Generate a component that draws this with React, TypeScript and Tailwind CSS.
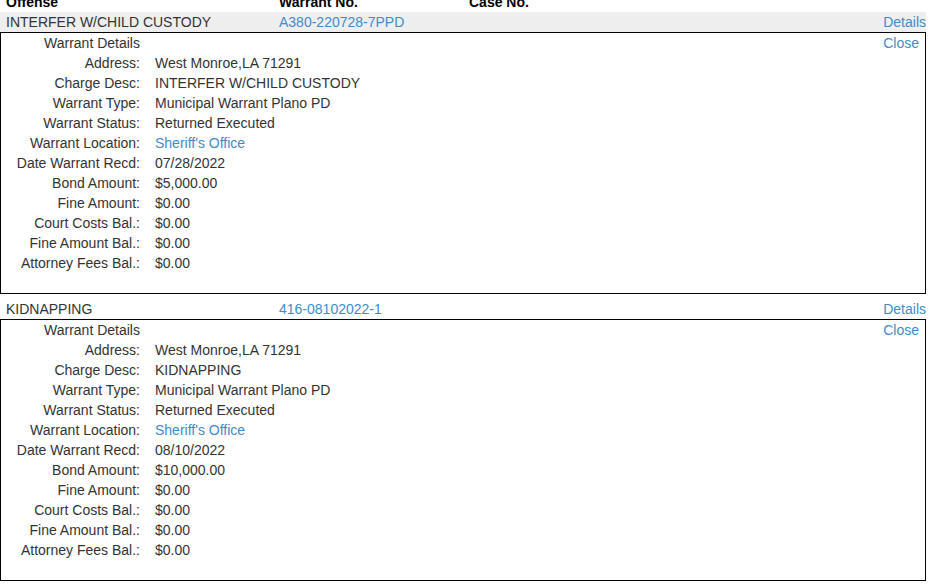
const warrants = [
  {
    offense: "INTERFER W/CHILD CUSTODY",
    number: "A380-220728-7PPD",
    shaded: true,
    details: {
      address: "West Monroe,LA 71291",
      charge: "INTERFER W/CHILD CUSTODY",
      recd: "07/28/2022",
      bond: "$5,000.00",
    },
  },
  {
    offense: "KIDNAPPING",
    number: "416-08102022-1",
    shaded: false,
    details: {
      address: "West Monroe,LA 71291",
      charge: "KIDNAPPING",
      recd: "08/10/2022",
      bond: "$10,000.00",
    },
  },
];

type Details = (typeof warrants)[number]["details"];

function Row({ label, children }: { label: string; children: React.ReactNode }) {
  return (
    <div className="flex h-5 items-center">
      <span className="w-[139px] text-right">{label}</span>
      <span className="pl-[15px]">{children}</span>
    </div>
  );
}

function DetailsBox({ d }: { d: Details }) {
  return (
    <div className="w-[926px] border border-black pb-5">
      <div className="flex h-5 items-center justify-between">
        <span className="pl-[43px]">Warrant Details</span>
        <span className="pr-[6px] text-[#428bca]">Close</span>
      </div>
      <Row label="Address:">{d.address}</Row>
      <Row label="Charge Desc:">{d.charge}</Row>
      <Row label="Warrant Type:">Municipal Warrant Plano PD</Row>
      <Row label="Warrant Status:">Returned Executed</Row>
      <Row label="Warrant Location:">
        <span className="text-[#428bca]">Sheriff's Office</span>
      </Row>
      <Row label="Date Warrant Recd:">{d.recd}</Row>
      <Row label="Bond Amount:">{d.bond}</Row>
      <Row label="Fine Amount:">$0.00</Row>
      <Row label="Court Costs Bal.:">$0.00</Row>
      <Row label="Fine Amount Bal.:">$0.00</Row>
      <Row label="Attorney Fees Bal.:">$0.00</Row>
    </div>
  );
}

export default function App() {
  return (
    <div
      className="h-[584px] w-[931px] overflow-hidden bg-white text-[14px] text-[#333]"
      style={{ fontFamily: '"Liberation Sans", Arial, sans-serif' }}
    >
      <div className="-mt-[8px] w-[926px]">
        <div className="flex h-5 items-center font-bold text-black">
          <span className="w-[279px] pl-[6px]">Offense</span>
          <span className="w-[190px]">Warrant No.</span>
          <span>Case No.</span>
        </div>

        {warrants.map((w, i) => (
          <div key={w.number} className={i > 0 ? "mt-[5px]" : ""}>
            <div
              className={`flex h-5 items-center ${w.shaded ? "bg-[#eeeeee]" : ""}`}
            >
              <span className="w-[279px] pl-[6px]">{w.offense}</span>
              <span className="w-[190px] text-[#428bca]">{w.number}</span>
              <span className="flex-1" />
              <span className="text-[#428bca]">Details</span>
            </div>
            <DetailsBox d={w.details} />
          </div>
        ))}
      </div>
    </div>
  );
}
